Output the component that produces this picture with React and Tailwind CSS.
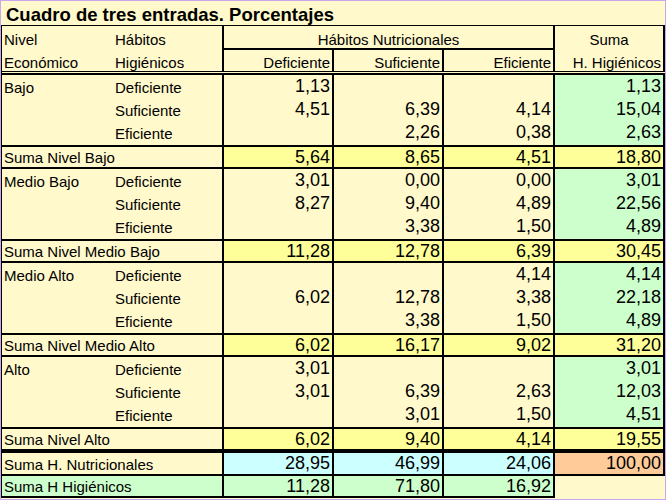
const groups = [
  {
    name: 'Bajo',
    rows: [
      ['Deficiente', '1,13', '', '', '1,13'],
      ['Suficiente', '4,51', '6,39', '4,14', '15,04'],
      ['Eficiente', '', '2,26', '0,38', '2,63'],
    ],
    suma: ['Suma Nivel Bajo', '5,64', '8,65', '4,51', '18,80'],
  },
  {
    name: 'Medio Bajo',
    rows: [
      ['Deficiente', '3,01', '0,00', '0,00', '3,01'],
      ['Suficiente', '8,27', '9,40', '4,89', '22,56'],
      ['Eficiente', '', '3,38', '1,50', '4,89'],
    ],
    suma: ['Suma Nivel Medio Bajo', '11,28', '12,78', '6,39', '30,45'],
  },
  {
    name: 'Medio Alto',
    rows: [
      ['Deficiente', '', '', '4,14', '4,14'],
      ['Suficiente', '6,02', '12,78', '3,38', '22,18'],
      ['Eficiente', '', '3,38', '1,50', '4,89'],
    ],
    suma: ['Suma Nivel Medio Alto', '6,02', '16,17', '9,02', '31,20'],
  },
  {
    name: 'Alto',
    rows: [
      ['Deficiente', '3,01', '', '', '3,01'],
      ['Suficiente', '3,01', '6,39', '2,63', '12,03'],
      ['Eficiente', '', '3,01', '1,50', '4,51'],
    ],
    suma: ['Suma Nivel Alto', '6,02', '9,40', '4,14', '19,55'],
  },
]

// column widths incl. the 2px right rule
const cols = ['w-[110px]', 'w-[110px]', 'w-[111px]', 'w-[110px]']
// three data rows per group add up to 70px
const rowH = ['h-[23px]', 'h-[23px]', 'h-[24px]']

function Num({ w, bg, children, extra = '' }) {
  return (
    <div className={`${w} ${bg} ${extra} border-r-2 border-black pr-[2px] text-right text-[18px]`}>
      {children}
    </div>
  )
}

function DataRow({ level, row, h }) {
  const [habit, ...vals] = row
  return (
    <div className={`flex ${h} leading-[23px]`}>
      <div className="w-[111px] pl-[2px] pt-[1px] text-[15px]">{level}</div>
      <div className="w-[111px] border-r-2 border-black pl-[2px] pt-[1px] text-[15px]">{habit}</div>
      {vals.map((v, i) => (
        <Num key={i} w={cols[i]} bg={i === 3 ? 'bg-[#ccffcc]' : ''}>
          {v}
        </Num>
      ))}
    </div>
  )
}

function SumaRow({ suma, last }) {
  const [label, ...vals] = suma
  return (
    <div
      className={`flex border-t-2 border-black leading-[20px] ${
        last ? 'h-[26px] border-b-4' : 'h-[24px] border-b-2'
      }`}
    >
      <div className="w-[222px] border-r-2 border-black pl-[2px] pt-[1px] text-[15px]">{label}</div>
      {vals.map((v, i) => (
        <Num key={i} w={cols[i]} bg="bg-[#ffff99]">
          {v}
        </Num>
      ))}
    </div>
  )
}

export default function App() {
  return (
    <div className="h-[500px] w-[666px] border border-[#c9a6ee] bg-[#fff9cc] font-['Liberation_Sans',Arial,sans-serif] text-black">
      <div className="h-[24px] pl-[5px] pt-[2px] text-[18.5px] font-bold leading-[24px]">
        Cuadro de tres entradas. Porcentajes
      </div>
      <div className="h-[1px] bg-black" />

      <div className="border-l border-black">
        {/* header */}
        <div className="flex text-[15px] leading-[17px]">
          <div className="w-[111px] pl-[2px]">
            <div className="h-[24px] pt-[5px]">Nivel</div>
            <div className="h-[21px] pt-[4px]">Económico</div>
          </div>
          <div className="w-[111px] border-r-2 border-black pl-[2px]">
            <div className="h-[24px] pt-[5px]">Hábitos</div>
            <div className="h-[21px] pt-[4px]">Higiénicos</div>
          </div>
          <div className="w-[331px]">
            <div className="h-[24px] border-b-2 border-r-2 border-black pt-[5px] text-center">
              Hábitos Nutricionales
            </div>
            <div className="flex h-[21px]">
              <div className="w-[110px] border-r-2 border-black pr-[2px] pt-[4px] text-right">Deficiente</div>
              <div className="w-[110px] border-r-2 border-black pr-[2px] pt-[4px] text-right">Suficiente</div>
              <div className="w-[111px] border-r-2 border-black pr-[2px] pt-[4px] text-right">Eficiente</div>
            </div>
          </div>
          <div className="w-[110px] border-r-2 border-black">
            <div className="h-[24px] pt-[5px] text-center">Suma</div>
            <div className="h-[21px] whitespace-nowrap pr-[2px] pt-[4px] text-right">H. Higiénicos</div>
          </div>
        </div>
        <div className="h-[1px] bg-black" />
        <div className="h-[1px]" />
        <div className="h-[2px] bg-black" />

        {groups.map((g, gi) => (
          <div key={g.name}>
            {g.rows.map((r, ri) => (
              <DataRow key={ri} level={ri === 0 ? g.name : ''} row={r} h={rowH[ri]} />
            ))}
            <SumaRow suma={g.suma} last={gi === groups.length - 1} />
          </div>
        ))}

        <div className="flex h-[23px] border-b-2 border-black leading-[21px]">
          <div className="w-[222px] border-r-2 border-black pl-[2px] pt-[1px] text-[15px]">
            Suma H. Nutricionales
          </div>
          <Num w={cols[0]} bg="bg-[#ccffff]">28,95</Num>
          <Num w={cols[1]} bg="bg-[#ccffff]">46,99</Num>
          <Num w={cols[2]} bg="bg-[#ccffff]">24,06</Num>
          <Num w={cols[3]} bg="bg-[#ffcc99]">100,00</Num>
        </div>

        <div className="flex h-[22px] leading-[20px]">
          <div className="w-[222px] border-b-2 border-r-2 border-black bg-[#ccffcc] pl-[2px] pt-[1px] text-[15px]">
            Suma H Higiénicos
          </div>
          <Num w={cols[0]} bg="bg-[#ccffcc]" extra="border-b-2">11,28</Num>
          <Num w={cols[1]} bg="bg-[#ccffcc]" extra="border-b-2">71,80</Num>
          <Num w={cols[2]} bg="bg-[#ccffcc]" extra="border-b-2">16,92</Num>
          <div className="w-[110px]" />
        </div>
      </div>
    </div>
  )
}
